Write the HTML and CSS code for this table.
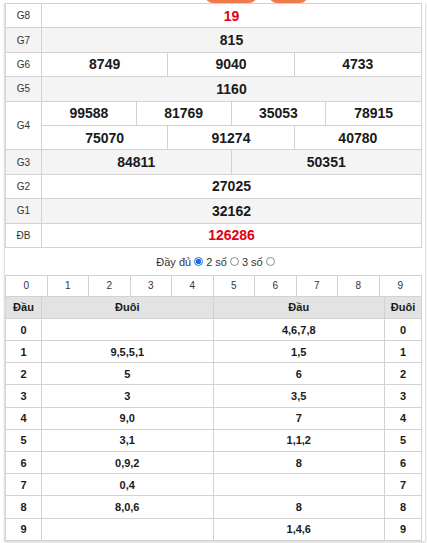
FILE: index.html
```html
<!DOCTYPE html>
<html lang="vi">
<head>
<meta charset="utf-8">
<link rel="stylesheet" href="styles.css">
</head>
<body>
<div class="tabs"><span class="tab tab-a"></span><span class="tab tab-b"></span></div>
<div class="box">
  <div class="results">
    <div class="row"><div class="label">G8</div><div class="vals c1"><div class="v red">19</div></div></div>
    <div class="row alt"><div class="label">G7</div><div class="vals c1"><div class="v">815</div></div></div>
    <div class="row"><div class="label">G6</div><div class="vals c3"><div class="v">8749</div><div class="v">9040</div><div class="v">4733</div></div></div>
    <div class="row alt"><div class="label">G5</div><div class="vals c1"><div class="v">1160</div></div></div>
    <div class="row double"><div class="label">G4</div>
      <div class="stack">
        <div class="vals c4 sub"><div class="v">99588</div><div class="v">81769</div><div class="v">35053</div><div class="v">78915</div></div>
        <div class="vals c3"><div class="v">75070</div><div class="v">91274</div><div class="v">40780</div></div>
      </div>
    </div>
    <div class="row alt"><div class="label">G3</div><div class="vals c2"><div class="v">84811</div><div class="v">50351</div></div></div>
    <div class="row"><div class="label">G2</div><div class="vals c1"><div class="v">27025</div></div></div>
    <div class="row alt"><div class="label">G1</div><div class="vals c1"><div class="v">32162</div></div></div>
    <div class="row"><div class="label">ĐB</div><div class="vals c1"><div class="v red">126286</div></div></div>
  </div>

  <div class="mode">
    <span>Đầy đủ</span><span class="radio on"></span>
    <span>2 số</span><span class="radio"></span>
    <span>3 số</span><span class="radio"></span>
  </div>

  <div class="loto">
    <div class="digits">
      <div>0</div><div>1</div><div>2</div><div>3</div><div>4</div><div>5</div><div>6</div><div>7</div><div>8</div><div>9</div>
    </div>
    <div class="lrow head"><div>Đầu</div><div>Đuôi</div><div>Đầu</div><div>Đuôi</div></div>
    <div class="lrow"><div>0</div><div></div><div>4,6,7,8</div><div>0</div></div>
    <div class="lrow"><div>1</div><div>9,5,5,1</div><div>1,5</div><div>1</div></div>
    <div class="lrow"><div>2</div><div>5</div><div>6</div><div>2</div></div>
    <div class="lrow"><div>3</div><div>3</div><div>3,5</div><div>3</div></div>
    <div class="lrow"><div>4</div><div>9,0</div><div>7</div><div>4</div></div>
    <div class="lrow"><div>5</div><div>3,1</div><div>1,1,2</div><div>5</div></div>
    <div class="lrow"><div>6</div><div>0,9,2</div><div>8</div><div>6</div></div>
    <div class="lrow"><div>7</div><div>0,4</div><div></div><div>7</div></div>
    <div class="lrow"><div>8</div><div>8,0,6</div><div>8</div><div>8</div></div>
    <div class="lrow"><div>9</div><div></div><div>1,4,6</div><div>9</div></div>
  </div>
</div>
</body>
</html>
```

FILE: styles.css
```css
* { box-sizing: border-box; }
html, body { margin: 0; padding: 0; background: #fff; }
body {
  width: 428px;
  height: 543px;
  overflow: hidden;
  font-family: "Liberation Sans", Arial, sans-serif;
  color: #222;
}

.tabs {
  height: 3px;
  position: relative;
}
.tab {
  position: absolute;
  top: -8px;
  height: 11px;
  background: #f07a4c;
  border-radius: 0 0 8px 8px;
}
.tab-a { left: 205px; width: 52px; }
.tab-b { left: 269px; width: 39px; }

.box {
  margin: 0 2px 0 4px;
  width: 422px;
  border-left: 1px solid #e4e4e4;
  border-right: 1px solid #e4e4e4;
  border-bottom: 1px solid #e0e0e0;
  box-shadow: 0 1px 2px rgba(0,0,0,0.12);
  padding: 0 4px 0 0;
}

/* results table */
.results {
  width: 417px;
  border: 1px solid #d2d2d2;
  border-bottom: none;
}
.row {
  display: flex;
  height: 24.4px;
  border-bottom: 1px solid #d2d2d2;
}
.row.double { height: 48.8px; }
.row.alt { background: #f4f4f4; }
.label {
  width: 36px;
  flex: none;
  border-right: 1px solid #d2d2d2;
  display: flex;
  align-items: center;
  justify-content: center;
  font-size: 10px;
  color: #333;
}
.stack {
  flex: 1;
  display: flex;
  flex-direction: column;
}
.stack .vals { flex: 1; }
.vals {
  flex: 1;
  display: grid;
}
.vals.sub { border-bottom: 1px solid #d2d2d2; }
.c1 { grid-template-columns: 1fr; }
.c2 { grid-template-columns: repeat(2, 1fr); }
.c3 { grid-template-columns: repeat(3, 1fr); }
.c4 { grid-template-columns: repeat(4, 1fr); }
.v {
  display: flex;
  align-items: center;
  justify-content: center;
  font-size: 14px;
  font-weight: bold;
  color: #1a1a1a;
  border-right: 1px solid #d2d2d2;
}
.v:last-child { border-right: none; }
.v.red { color: #e3000f; }

/* mode selector */
.mode {
  height: 26.7px;
  display: flex;
  align-items: center;
  justify-content: center;
  gap: 2px;
  font-size: 11px;
  color: #333;
  padding-left: 6px;
  padding-top: 1px;
}
.radio {
  width: 9px;
  height: 9px;
  border-radius: 50%;
  border: 1px solid #8a8a8a;
  background: #fff;
  margin: 0 1px 0 1px;
}
.radio.on {
  border-color: #1a6fe0;
  background: radial-gradient(circle, #1a6fe0 0 2.5px, #fff 3px);
}

/* loto table */
.loto {
  width: 417px;
  border: 1px solid #d2d2d2;
  border-bottom: none;
}
.digits {
  display: grid;
  grid-template-columns: repeat(10, 1fr);
  height: 21px;
  border-bottom: 1px solid #d2d2d2;
}
.digits div {
  display: flex;
  align-items: center;
  justify-content: center;
  font-size: 10px;
  color: #333;
  border-right: 1px solid #d2d2d2;
}
.digits div:last-child { border-right: none; }
.lrow {
  display: grid;
  grid-template-columns: 36px 1fr 1fr 36px;
  height: 22.2px;
  border-bottom: 1px solid #d2d2d2;
}
.lrow.head {
  background: #e3e3e3;
  height: 22.3px;
}
.lrow div {
  display: flex;
  align-items: center;
  justify-content: center;
  font-size: 11px;
  font-weight: bold;
  color: #1a1a1a;
  border-right: 1px solid #d2d2d2;
}
.lrow div:last-child { border-right: none; }
```
